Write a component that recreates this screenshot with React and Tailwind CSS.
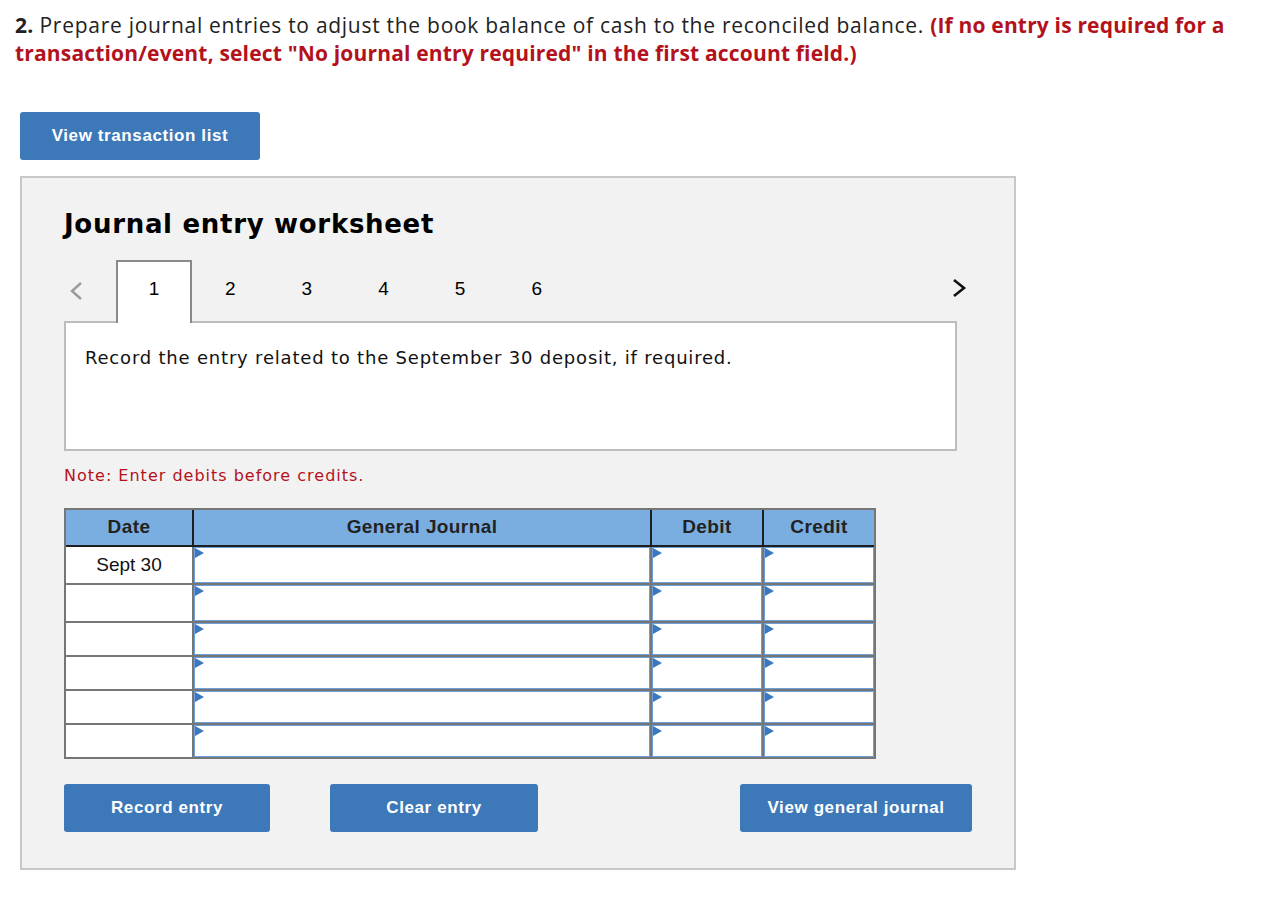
import React from 'react';

const rows = [
  { date: 'Sept 30', h: 'h-[36px]' },
  { date: '', h: 'h-[36px]' },
  { date: '', h: 'h-[32px]' },
  { date: '', h: 'h-[32px]' },
  { date: '', h: 'h-[32px]' },
  { date: '', h: 'h-[32px]' },
];

function InputCell() {
  return (
    <div className="relative h-full bg-white border border-[#6d9fd8]">
      <span className="absolute left-0 top-0 w-0 h-0 border-y-[5px] border-y-transparent border-l-[9px] border-l-[#3c78c0]" />
    </div>
  );
}

function Button({ children, className = '' }) {
  return (
    <button
      type="button"
      className={`h-[48px] rounded-[3px] bg-[#3d78b9] text-white font-bold text-[17px] tracking-[0.6px] font-['Liberation_Sans',Arial,sans-serif] ${className}`}
    >
      {children}
    </button>
  );
}

export default function App() {
  const tabs = [1, 2, 3, 4, 5, 6];

  return (
    <div className="min-h-[902px] bg-white pt-[11px] pl-[15px] pr-[20px] font-['Open_Sans',sans-serif]">
      <p className="text-[21px] leading-[28px] tracking-[0.72px] text-[#222]">
        <span className="font-bold tracking-[0.17px]">2.</span> Prepare journal entries to adjust the book balance of cash to the reconciled balance.{' '}
        <span className="font-bold tracking-[0.17px] text-[#b3121c]">
          (If no entry is required for a transaction/event, select "No journal entry required" in the first account field.)
        </span>
      </p>

      <Button className="mt-[45px] ml-[5px] w-[240px]">View transaction list</Button>

      <section className="mt-[16px] ml-[5px] w-[996px] border-2 border-[#c8c8c8] bg-[#f2f2f2] px-[42px] pb-[36px] font-['DejaVu_Sans',Verdana,sans-serif]">
        <h2 className="mt-[28px] text-[26px] leading-[36px] font-bold tracking-[0.7px] text-black">Journal entry worksheet</h2>

        <div className="mt-[18px] flex items-end w-[912px]">
          <div className="w-[52px] h-[61px] flex items-center pl-[5px]">
            <svg width="14" height="20" viewBox="0 0 14 20" fill="none">
              <path d="M12 2 L3 10 L12 18" stroke="#9a9a9a" strokeWidth="2.4" />
            </svg>
          </div>
          {tabs.map((t) =>
            t === 1 ? (
              <div
                key={t}
                className="relative z-10 -mb-[2px] w-[76px] h-[63px] bg-white border-2 border-b-0 border-[#8a8a8a] flex items-start justify-center pt-[13px] font-['Liberation_Sans',Arial,sans-serif] text-[19px] text-black"
              >
                {t}
              </div>
            ) : (
              <div
                key={t}
                className="w-[76.6px] h-[61px] flex items-start justify-center pt-[15px] font-['Liberation_Sans',Arial,sans-serif] text-[19px] text-black"
              >
                {t}
              </div>
            )
          )}
          <div className="flex-1 h-[61px] flex items-center justify-end pr-[9px] pb-[6px]">
            <svg width="16" height="20" viewBox="0 0 16 20" fill="none">
              <path d="M3 2 L13 10 L3 18" stroke="#111" strokeWidth="2.6" />
            </svg>
          </div>
        </div>

        <div className="w-[893px] h-[130px] bg-white border-2 border-[#bdbdbd] px-[19px] pt-[21px] text-[18px] tracking-[0.8px] text-[#111]">
          Record the entry related to the September 30 deposit, if required.
        </div>

        <p className="mt-[14px] text-[16px] leading-[22px] tracking-[1px] text-[#b3121c]">Note: Enter debits before credits.</p>

        <div className="mt-[21px] w-[812px] border-2 border-[#767676] bg-[#767676] font-['Liberation_Sans',Arial,sans-serif]">
          <div className="grid grid-cols-[126px_456px_110px_110px] gap-x-[2px] bg-[#1e1e1e] border-b-2 border-[#1e1e1e] h-[37px]">
            {['Date', 'General Journal', 'Debit', 'Credit'].map((h) => (
              <div key={h} className="bg-[#7aaee1] flex items-center justify-center text-[19px] font-bold tracking-[0.4px] text-[#222]">
                {h}
              </div>
            ))}
          </div>
          <div className="flex flex-col gap-y-[2px]">
            {rows.map((r, i) => (
              <div key={i} className={`grid grid-cols-[126px_456px_110px_110px] gap-x-[2px] ${r.h}`}>
                <div className="bg-white flex items-center justify-center text-[19px] text-[#111]">{r.date}</div>
                <InputCell />
                <InputCell />
                <InputCell />
              </div>
            ))}
          </div>
        </div>

        <div className="mt-[25px] flex items-center">
          <Button className="w-[206px]">Record entry</Button>
          <Button className="ml-[60px] w-[208px]">Clear entry</Button>
          <Button className="ml-[202px] w-[232px]">View general journal</Button>
        </div>
      </section>
    </div>
  );
}
